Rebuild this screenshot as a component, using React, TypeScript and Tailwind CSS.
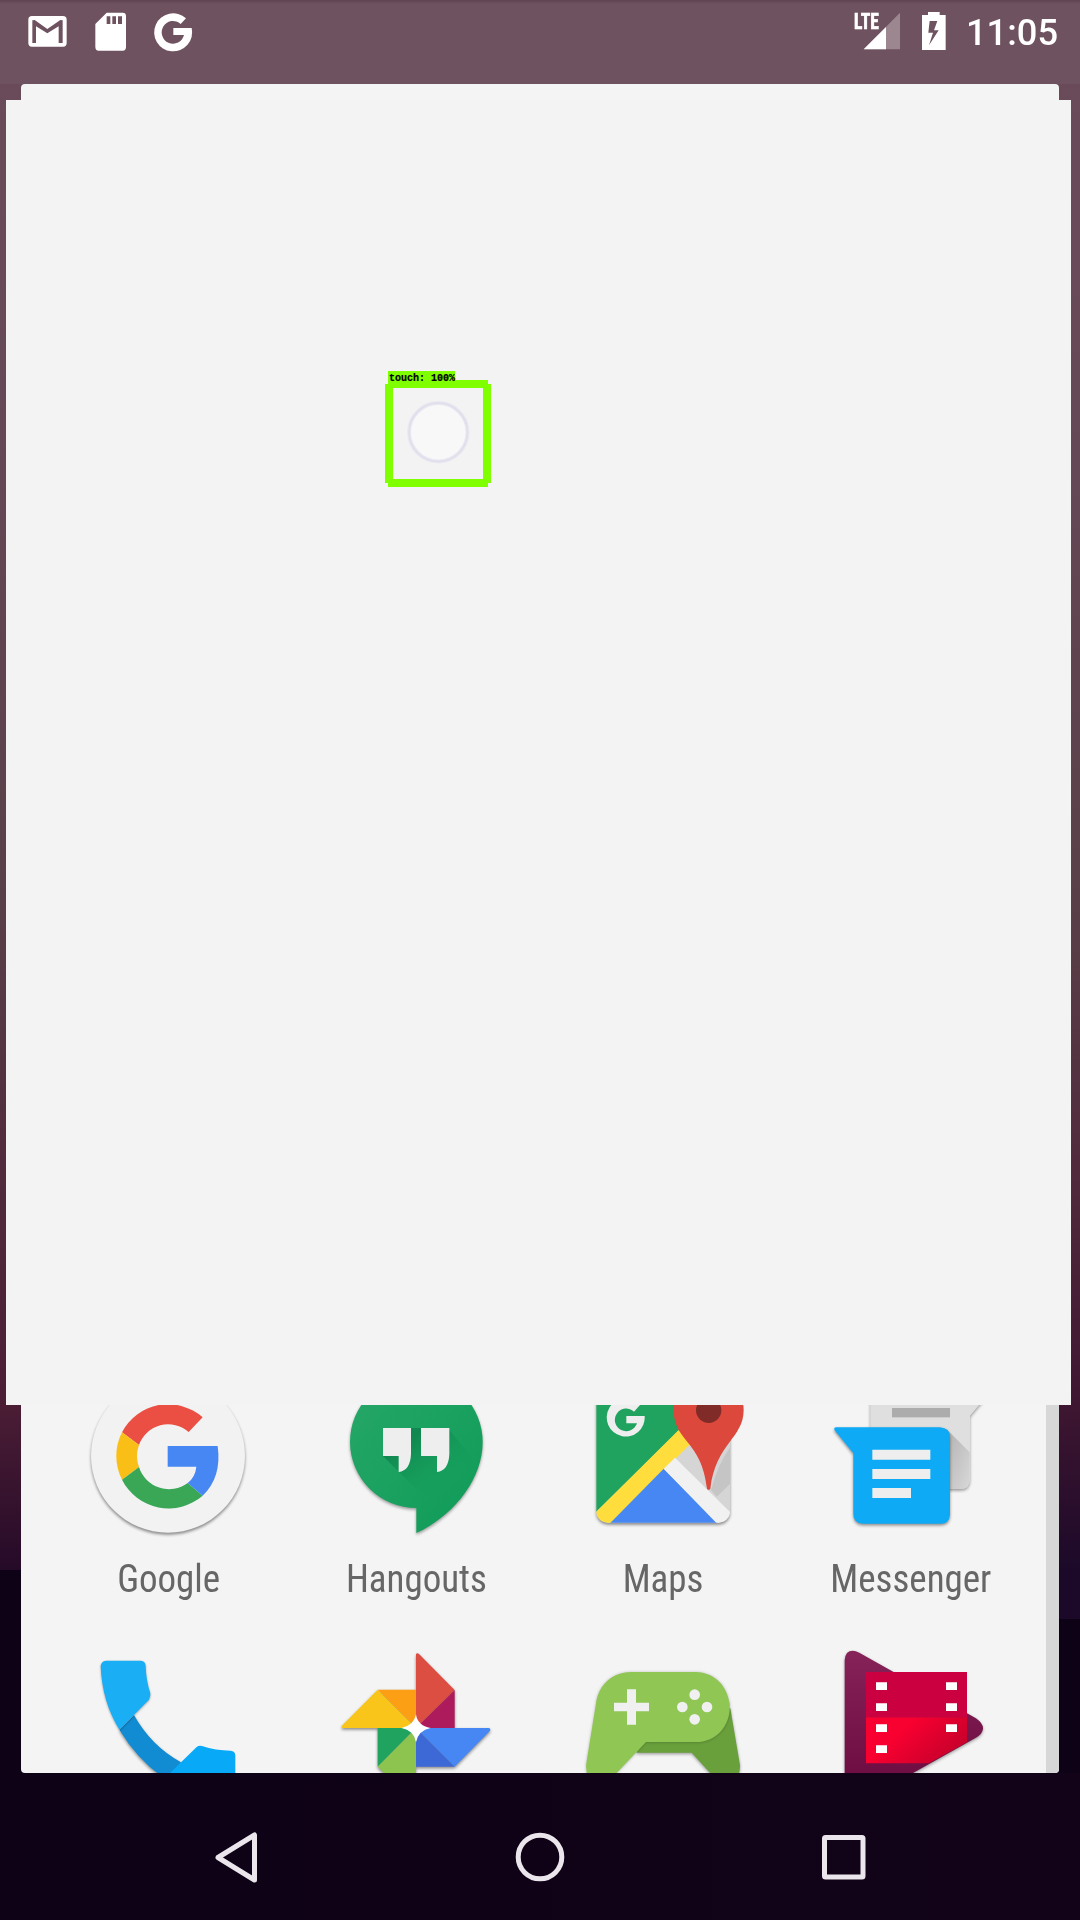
import type { ReactNode } from "react";

function StatusBar() {
  return (
    <header className="flex h-[84px] shrink-0 items-start bg-[linear-gradient(#5f4351_0px,#6f525f_4px)] pl-5 text-white">
      <svg className="h-[60px] w-[60px]" viewBox="60 0 180 180" fill="white">
        <path
          fillRule="evenodd"
          d="M96 48H189Q200 48 200 59V129Q200 140 189 140H96Q85 140 85 129V59Q85 48 96 48ZM97 61V129H108V79L142 100L176 79V129H188V61L181 60L142 87L104 60Z"
        />
      </svg>
      <svg className="h-[60px] w-[60px]" viewBox="240 0 180 180" fill="white">
        <path
          fillRule="evenodd"
          d="M320 38H368Q378 38 378 48V141Q378 152 368 152H296Q286 152 286 141V72ZM320 49V72H331V49ZM337 49V72H348V49ZM354 49V72H366V49Z"
        />
      </svg>
      <svg className="h-[60px] w-[60px]" viewBox="420 0 180 180" fill="white">
        <path d="M558 55A57 57 0 1 0 575 84H520V105H552A34 34 0 1 1 542 72Z" />
      </svg>
      <div className="grow" />
      <div className="relative h-[60px] w-[60px]">
        <svg className="h-[60px] w-[60px]" viewBox="210 0 180 180">
          <path d="M360 38V148H251Z" fill="#9c8791" />
          <path d="M318 81V148H251Z" fill="white" />
        </svg>
        <span className="absolute top-[10px] left-[4px] origin-left scale-x-[.78] font-['Roboto_Condensed','Roboto'] text-[22.5px] leading-[22px] font-extrabold [-webkit-text-stroke:0.5px_white]">
          LTE
        </span>
      </div>
      <svg className="h-[60px] w-[50px]" viewBox="390 0 150 180" fill="white">
        <path
          fillRule="evenodd"
          d="M444 36H479V45H497V150H426V45H444ZM449 63L445 98H459L447 136L476 91H462L472 63Z"
        />
      </svg>
      <time className="mt-3 mr-[22px] w-[98px] origin-right scale-x-[.98] text-right font-['Roboto'] text-[37px] leading-[41px] font-medium whitespace-nowrap">
        11:05
      </time>
    </header>
  );
}

function Detection() {
  return (
    <div className="absolute top-[270px] left-[378px] h-[120px] w-[110px]">
      <svg className="h-[120px] w-[110px]" viewBox="384 370 110 120">
        <path
          fill="#7fff00"
          fillRule="evenodd"
          d="M388 380H488V384H491V483H488V487H388V483H385V384H388ZM393 388V479H483V388Z"
        />
        <path fill="#7fff00" d="M388 371H455V382H388Z" />
        <circle cx="438.3" cy="432.3" r="29.2" fill="#f8f8f8" stroke="#e9e8f1" strokeWidth="4" />
        <circle cx="438.3" cy="432.3" r="29.2" fill="none" stroke="#dfdeeb" strokeWidth="1.5" />
      </svg>
      <span className="absolute top-[4px] left-[5px] font-['Liberation_Mono'] text-[10px] leading-[10px] font-bold whitespace-pre text-black [-webkit-text-stroke:0.2px_black]">
        touch: 100%
      </span>
    </div>
  );
}

function GoogleIcon() {
  return (
    <svg className="h-[155px] w-[247px]" viewBox="-45 75 741 465">
      <circle cx="324" cy="227" r="231" fill="#f2f2f2" className="drop-shadow-[0_6px_5px_#00000070]" />
      <path fill="#eb4f43" d="M186 157A156 156 0 0 1 428 112L386 156A93 93 0 0 0 237 195Z" />
      <path fill="#fabf16" d="M186 157A156 156 0 0 0 186 299L237 261A95 95 0 0 1 237 195Z" />
      <path fill="#3aa757" d="M186 299A156 156 0 0 0 428 347L383 309A94 94 0 0 1 237 261Z" />
      <path fill="#4787f3" d="M323 198H473Q486 292 428 347L383 309Q406 291 409 260H323Z" />
    </svg>
  );
}

function HangoutsIcon() {
  return (
    <svg className="h-[155px] w-[248px]" viewBox="-84 75 744 465">
      <defs>
        <linearGradient id="hangouts" x1="0" y1="0" x2="1" y2="1">
          <stop offset="0" stopColor="#26a768" />
          <stop offset="1" stopColor="#0f9b57" />
        </linearGradient>
        <linearGradient id="quoteShade" gradientUnits="userSpaceOnUse" x1="250" y1="190" x2="350" y2="330">
          <stop offset="0" stopColor="#0b7c48" />
          <stop offset="1" stopColor="#0f9b57" stopOpacity="0" />
        </linearGradient>
      </defs>
      <path
        className="drop-shadow-[0_5px_4px_#00000060]"
        fill="url(#hangouts)"
        d="M289 -13A199 199 0 0 1 488 187C488 300 398 410 289 459V384A199 199 0 0 1 90 186A199 199 0 0 1 289 -13Z"
      />
      <path fill="url(#quoteShade)" d="M189 228L345 384L470 250L388 150L303 144L273 144Z" opacity=".7" />
      <path fill="#eeeeee" d="M189 144H273V222Q271 272 236 276V228H189ZM303 144H388V222Q386 272 351 276V228H303Z" />
    </svg>
  );
}

function MapsIcon() {
  return (
    <svg className="h-[155px] w-[247px]" viewBox="-60 75 741 465">
      <defs>
        <clipPath id="mapTile">
          <rect x="109" y="20" width="401" height="408" rx="34" />
        </clipPath>
      </defs>
      <rect
        x="109"
        y="20"
        width="401"
        height="408"
        rx="34"
        fill="#d5d5d5"
        className="drop-shadow-[0_6px_4px_#00000070]"
      />
      <g clipPath="url(#mapTile)">
        <path fill="#20a35f" d="M100 20H400V110L356 152L100 404Z" />
        <path fill="#fedd3d" d="M356 150L100 404V438H144L390 193Z" />
        <path fill="#4787f3" d="M311 266L142 438H482Z" />
        <path fill="#f1f1f1" d="M345 233L520 406V440H480L311 266Z" />
        <path fill="#bdbdbd" opacity=".7" d="M512 200Q475 250 453 330L470 350L512 310Z" />
      </g>
      <path fill="#eeeeee" d="M240 75A57 57 0 1 0 254 108H199V130H231A34 34 0 1 1 222 95L240 75Z" />
      <path
        fill="#dc493c"
        d="M446 -12C390 -12 341 30 341 90C341 185 425 180 441 326Q446 333 451 326C467 190 551 175 551 90C551 30 502 -12 446 -12Z"
      />
      <circle cx="446" cy="91" r="38" fill="#802b27" />
    </svg>
  );
}

function MessengerIcon() {
  return (
    <svg className="h-[155px] w-[248px]" viewBox="-39 75 744 465">
      <defs>
        <linearGradient id="backBubble" x1="0" y1="0" x2="1" y2="1">
          <stop offset="0" stopColor="#b2b2b2" />
          <stop offset="1" stopColor="#d8d8d8" />
        </linearGradient>
      </defs>
      <path
        className="drop-shadow-[0_5px_4px_#00000060]"
        fill="#dfdfdf"
        d="M211 60H550L510 107V296Q510 327 480 327H211Z"
      />
      <path fill="url(#backBubble)" d="M440 148L509 217V296Q510 327 480 327H440Z" />
      <rect x="276" y="84" width="174" height="28" fill="#acacac" />
      <path
        className="drop-shadow-[0_5px_4px_#00000070]"
        fill="#0eaaf6"
        d="M108 142H420Q450 144 450 172V404Q448 431 421 431H189Q160 430 160 402V220L104 151Q100 143 108 142Z"
      />
      <path fill="#eeeeee" d="M217 209H391V239H217ZM217 267H391V297H217ZM217 324H333V354H217Z" />
    </svg>
  );
}

function PhoneIcon() {
  return (
    <svg className="h-[143px] w-[247px]" viewBox="-45 0 741 429">
      <path
        className="drop-shadow-[0_5px_4px_#00000070]"
        fill="#118bd2"
        d="M178 299L222 255Q273 347 362 396L370 450H320Q235 393 178 299Z"
      />
      <path
        className="drop-shadow-[0_3px_3px_#00000050]"
        fill="#1aaef5"
        d="M138 92H243Q256 94 257 107Q258 150 271 190Q272 200 267 209L178 299Q126 215 122 108Q124 93 138 92Z"
      />
      <path fill="#08a9f7" d="M330 429L410 351Q417 345 426 348Q467 362 512 362Q525 363 526 376V440H320Z" />
    </svg>
  );
}

function PhotosIcon() {
  return (
    <svg className="h-[143px] w-[248px]" viewBox="-84 0 744 429">
      <g className="drop-shadow-[0_5px_4px_#00000070]">
        <path fill="#db4e41" d="M288 72Q292 68 297 72L404 180L288 294Z" />
        <path fill="#ad1b5d" d="M404 180V294H288Z" />
        <path fill="#fd9f14" d="M173 179H288V294Z" />
        <path fill="#fac51b" d="M173 179L65 288Q63 294 70 294H288Z" />
        <path fill="#20a35f" d="M173 294H288L173 410Z" />
        <path fill="#8dc44f" d="M288 294V430H193L173 410Z" />
        <path fill="#4787f3" d="M288 294H508Q513 297 510 302L404 410Z" />
        <path fill="#3d69d6" d="M288 294L404 410H288Z" />
      </g>
      <path fill="white" d="M288 253Q292 287 332 294Q295 301 288 337Q282 301 244 294Q282 287 288 253Z" />
    </svg>
  );
}

function GamesIcon() {
  return (
    <svg className="h-[143px] w-[247px]" viewBox="-60 0 741 429">
      <path
        className="drop-shadow-[0_4px_4px_#00000060]"
        fill="#6aa03c"
        d="M511 235L540 405Q541 430 530 445H465L395 368H229L300 240Z"
      />
      <path
        className="drop-shadow-[0_1px_4px_#00000040]"
        fill="#8fc654"
        d="M212 126H407C467 128 500 168 509 220C514 285 470 336 408 336H258L155 445H86Q76 425 79 400L108 220C116 165 155 128 212 126Z"
      />
      <path fill="#f0f0f0" d="M201 178H228V218H267V244H228V284H201V244H162V218H201Z" />
      <g fill="#f0f0f0">
        <circle cx="404" cy="194" r="16" />
        <circle cx="367" cy="231" r="16" />
        <circle cx="441" cy="231" r="16" />
        <circle cx="404" cy="268" r="16" />
      </g>
    </svg>
  );
}

function MoviesIcon() {
  return (
    <svg className="h-[143px] w-[248px]" viewBox="-39 0 744 429">
      <defs>
        <linearGradient id="playShade" x1="0" y1="0" x2="0" y2="1">
          <stop offset="0" stopColor="#862358" />
          <stop offset="1" stopColor="#6d0d42" />
        </linearGradient>
        <linearGradient id="filmRed" x1="0" y1="0" x2="1" y2=".5">
          <stop offset=".4" stopColor="#f80030" />
          <stop offset="1" stopColor="#c9002c" />
        </linearGradient>
      </defs>
      <path
        className="drop-shadow-[0_4px_4px_#00000060]"
        fill="url(#playShade)"
        d="M134 90Q136 62 158 62Q167 62 178 68L528 265Q550 281 549 296Q548 311 528 323L338 430L310 445H134Z"
      />
      <path fill="#cb0040" d="M198 126H501V262H198Z" />
      <path fill="url(#filmRed)" d="M198 262H501V337L386 400H198Z" />
      <path
        fill="white"
        d="M228 157H261V180H228ZM228 220H261V243H228ZM228 283H261V306H228ZM228 346H261V369H228ZM438 157H471V180H438ZM438 220H471V243H438ZM438 283H471V306H438Z"
      />
    </svg>
  );
}

function AppTile({ label, children }: { label: string; children: ReactNode }) {
  return (
    <div className="flex flex-col items-center">
      {children}
      <span className="h-[70px] scale-x-[.96] font-['Roboto_Condensed','Roboto'] text-[38.5px] leading-[37px] whitespace-nowrap text-[#666666]">
        {label}
      </span>
    </div>
  );
}

function NavBar() {
  return (
    <nav className="grid h-[147px] shrink-0 grid-cols-[304px_304px_304px] justify-center bg-[linear-gradient(90deg,#0d0216,#120318)] pt-[53px]">
      <svg className="h-[62px] w-[62px] justify-self-center" viewBox="205 1826 62 62" fill="none" stroke="#ebe6ec" strokeWidth="5" strokeLinejoin="round">
        <path d="M254.5 1835V1880L218 1857.5Z" />
      </svg>
      <svg className="h-[62px] w-[62px] justify-self-center" viewBox="509 1826 62 62" fill="none" stroke="#ebe6ec" strokeWidth="5">
        <circle cx="540" cy="1857" r="21.8" />
      </svg>
      <svg className="h-[62px] w-[62px] justify-self-center" viewBox="813 1826 62 62" fill="none" stroke="#ebe6ec" strokeWidth="5" strokeLinejoin="round">
        <rect x="824.5" y="1837.5" width="38.5" height="39.5" rx="1" />
      </svg>
    </nav>
  );
}

export default function App() {
  return (
    <div className="relative isolate flex h-[1920px] w-[1080px] flex-col overflow-hidden bg-[#0d0216]">
      <div className="absolute inset-0 -z-10 flex justify-between">
        <div className="h-[1570px] w-[540px] bg-[linear-gradient(#6b4b5a_0px,#664957_400px,#594048_900px,#50283b_1200px,#4b1d35_1405px,#250a28_1570px)]" />
        <div className="h-[1619px] w-[540px] bg-[linear-gradient(#6b4b5a_0px,#664957_400px,#594048_900px,#50283b_1200px,#3e1631_1405px,#1c0929_1570px)]" />
      </div>
      <StatusBar />
      <main className="mx-[21px] flex h-[1689px] shrink-0 flex-col rounded-[4px] bg-[#f4f4f4] pt-4">
        <section className="relative -mr-3 -ml-[15px] h-[1305px] shrink-0 bg-[#f3f3f3]">
          <Detection />
        </section>
        <div className="flex h-[368px] justify-between overflow-hidden rounded-b-[4px] pl-6">
          <div className="grid grid-cols-[247px_248px_247px_248px] grid-rows-[225px_143px]">
            <AppTile label="Google"><GoogleIcon /></AppTile>
            <AppTile label="Hangouts"><HangoutsIcon /></AppTile>
            <AppTile label="Maps"><MapsIcon /></AppTile>
            <AppTile label="Messenger"><MessengerIcon /></AppTile>
            <PhoneIcon />
            <PhotosIcon />
            <GamesIcon />
            <MoviesIcon />
          </div>
          <div className="w-[13px] bg-[#d7d7d7]" />
        </div>
      </main>
      <NavBar />
    </div>
  );
}
